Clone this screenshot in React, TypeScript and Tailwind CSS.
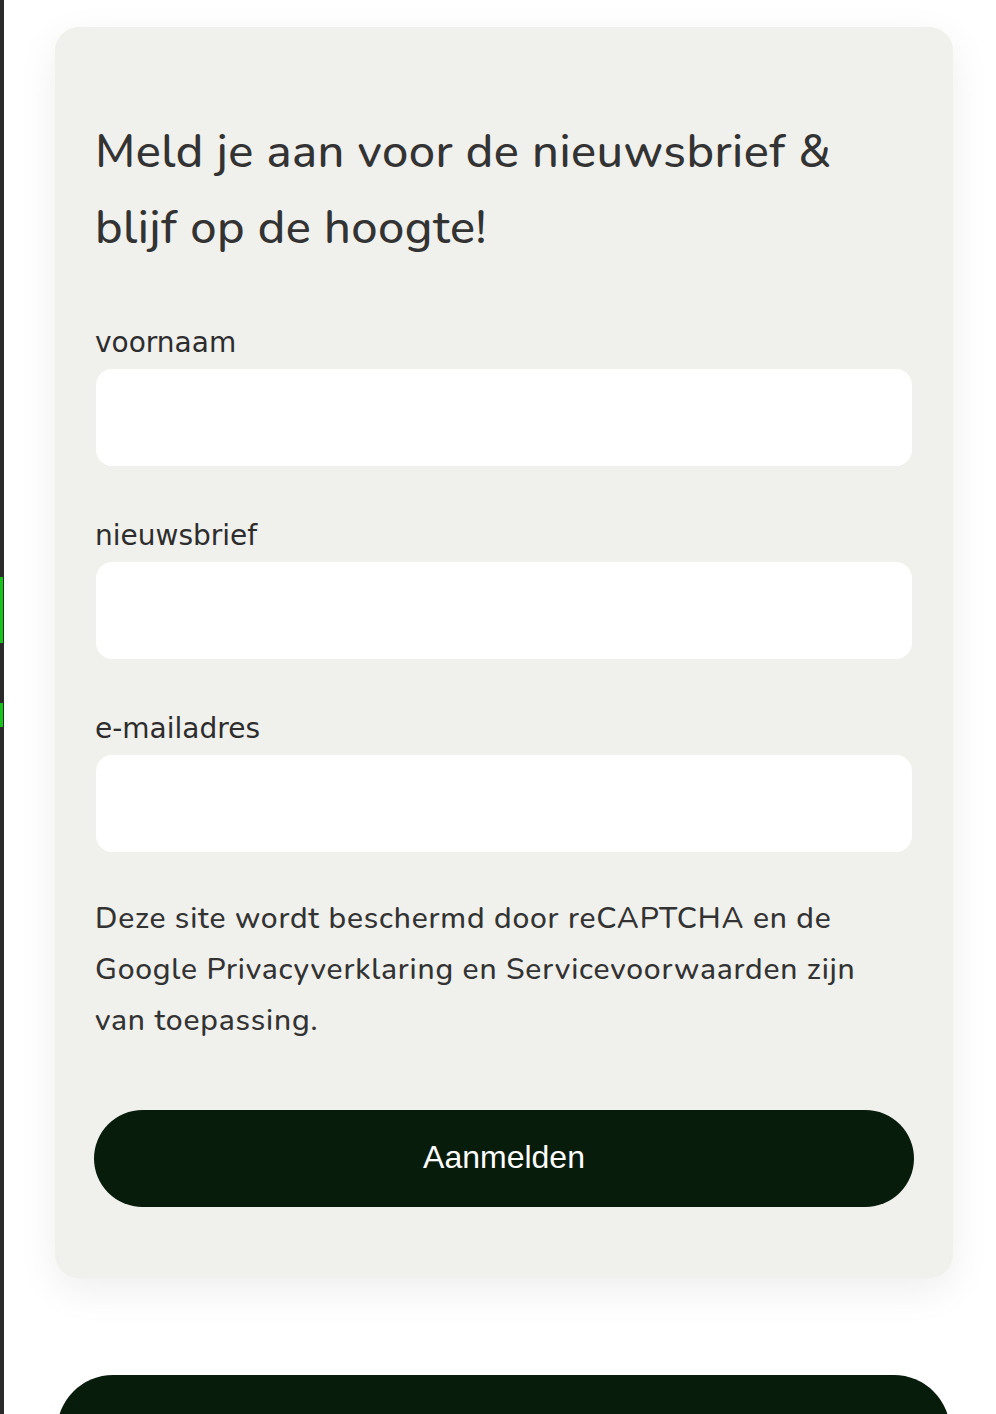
import React from "react";

const body = { fontFamily: "Nunito, Lato, 'Noto Sans', sans-serif" };

function Field({ label }: { label: string }) {
  return (
    <div className="flex flex-col">
      <label
        className="pt-[3px] text-[28px] leading-[40px] text-[#2d2d2d] pl-[40px]"
        style={{ fontFamily: "Verdana, 'DejaVu Sans', sans-serif" }}
      >
        {label}
      </label>
      <div className="mt-[6px] ml-[41px] mr-[41px] h-[97px] rounded-[16px] bg-white" />
    </div>
  );
}

export default function App() {
  return (
    <div className="relative h-[1414px] w-[996px] overflow-hidden bg-white">
      <div className="absolute left-0 top-0 h-full w-[4px] bg-[#2a2a2a]">
        <div className="absolute left-0 top-[577px] h-[66px] w-[3px] bg-[#17c21a]" />
        <div className="absolute left-0 top-[703px] h-[24px] w-[3px] bg-[#17c21a]" />
      </div>
      <div className="flex flex-col pt-[27px] pl-[55px] pr-[43px]">
        <div
          className="flex flex-col rounded-[24px] bg-[#f0f0ec] pt-[87px] pb-[71px] shadow-[0_12px_40px_rgba(0,0,0,0.07)]"
          style={body}
        >
          <h2 className="px-[40px] text-[47px] leading-[76px] tracking-[0.45px] text-[#333333] font-medium">
            Meld je aan voor de nieuwsbrief &amp;
            <br />
            blijf op de hoogte!
          </h2>
          <div className="mt-[54px] flex flex-col gap-[47px]">
            <Field label="voornaam" />
            <Field label="nieuwsbrief" />
            <Field label="e-mailadres" />
          </div>
          <p className="mt-[41px] px-[40px] text-[30px] leading-[51px] tracking-[0.8px] text-[#333333] font-medium">
            Deze site wordt beschermd door reCAPTCHA en de
            <br />
            Google Privacyverklaring en Servicevoorwaarden zijn
            <br />
            van toepassing.
          </p>
          <div className="mt-[64px] px-[39px]">
            <button
              className="flex h-[97px] w-full items-center justify-center rounded-full bg-[#081c0b] pb-[3px] text-[32px] text-white"
              style={{ fontFamily: "'Liberation Sans', Arial, sans-serif" }}
            >
              Aanmelden
            </button>
          </div>
        </div>
        <div className="mt-[97px] ml-[2px] mr-[3px] h-[120px] rounded-[56px] bg-[#081c0b]" />
      </div>
    </div>
  );
}
